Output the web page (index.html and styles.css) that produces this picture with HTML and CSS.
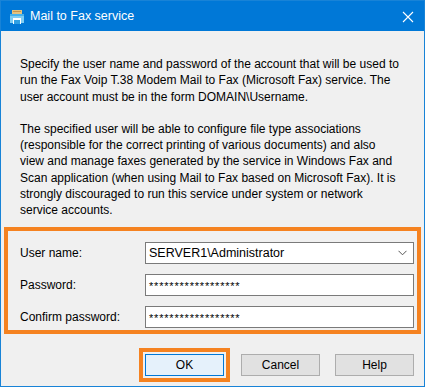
FILE: index.html
```html
<!DOCTYPE html>
<html lang="en">
  <head>
    <meta charset="UTF-8" />
    <title>Mail to Fax service</title>
    <link rel="stylesheet" href="styles.css">
  </head>
  <body>
    <div class="window">
      <div class="titlebar">
        <svg class="app-icon" width="16" height="16" viewBox="0 0 16 16">
          <rect x="3" y="1" width="10" height="5" fill="#e3c27f" />
          <rect x="4" y="2" width="8" height="1" fill="#c9964a" />
          <rect x="1" y="5" width="14" height="9" fill="#7fcdf3" />
          <rect x="1" y="5" width="14" height="2" fill="#45b2ec" />
          <rect x="4" y="9" width="8" height="6" fill="#ffffff" />
          <rect x="5" y="11" width="6" height="4" fill="#2f9fe3" />
        </svg>
        <span class="title">Mail to Fax service</span>
        <svg class="close" width="12" height="12" viewBox="0 0 12 12">
          <path d="M1 1 L11 11 M11 1 L1 11" stroke="#fff" stroke-width="1.1" fill="none" />
        </svg>
      </div>

      <div class="content">
        <p class="intro">
          Specify the user name and password of the account that will be used to<br>
          run the Fax Voip T.38 Modem Mail to Fax (Microsoft Fax) service. The<br>
          user account must be in the form DOMAIN\Username.
        </p>
        <p class="intro">
          The specified user will be able to configure file type associations<br>
          (responsible for the correct printing of various documents) and also<br>
          view and manage faxes generated by the service in Windows Fax and<br>
          Scan application (when using Mail to Fax based on Microsoft Fax). It is<br>
          strongly discouraged to run this service under system or network<br>
          service accounts.
        </p>

        <div class="account-box">
          <div class="field">
            <label>User name:</label>
            <div class="combo">
              <span>SERVER1\Administrator</span>
              <svg width="9" height="6" viewBox="0 0 9 6">
                <path d="M0.5 0.8 L4.5 4.8 L8.5 0.8" stroke="#555" stroke-width="1" fill="none" />
              </svg>
            </div>
          </div>
          <div class="field">
            <label>Password:</label>
            <div class="textbox">******************</div>
          </div>
          <div class="field">
            <label>Confirm password:</label>
            <div class="textbox">******************</div>
          </div>
        </div>

        <div class="buttons">
          <div class="ok-mark">
            <button class="btn btn-default">OK</button>
          </div>
          <button class="btn btn-cancel">Cancel</button>
          <button class="btn">Help</button>
        </div>
      </div>
    </div>
  </body>
</html>
```

FILE: styles.css
```css
body {
  margin: 0;
  padding: 0;
  font-family: 'Liberation Sans', Arial, sans-serif;
  font-size: 12px;
  color: #000;
  background-color: #fff;
}

.window {
  width: 425px;
  height: 387px;
  box-sizing: border-box;
  border: 1px solid #1883d7;
  background-color: #f0f0f0;
  display: flex;
  flex-direction: column;
}

.titlebar {
  height: 30px;
  background-color: #0078d7;
  display: flex;
  align-items: center;
  color: #fff;
  flex-shrink: 0;
}

.app-icon {
  margin-left: 8px;
  margin-top: 1px;
}

.title {
  margin-left: 5px;
  font-size: 12.5px;
  flex: 1;
}

.close {
  margin-right: 10px;
  margin-top: 1px;
}

.content {
  padding: 25px 0 0 0;
  flex: 1;
}

.intro {
  margin: 0 0 16px 19px;
  line-height: 16.3px;
  white-space: nowrap;
}

.intro:last-of-type {
  margin-bottom: 8px;
}

/* 帳號欄位外框 */
.account-box {
  margin-left: 3px;
  width: 417px;
  box-sizing: border-box;
  border: 4px solid #f58220;
  padding: 11px 3px 2px 12px;
  display: flex;
  flex-direction: column;
  gap: 10px;
}

.field {
  display: flex;
  align-items: center;
  height: 22px;
}

.field label {
  width: 125px;
}

.combo,
.textbox {
  flex: 1;
  height: 22px;
  box-sizing: border-box;
  background-color: #fff;
  border: 1px solid #7a7a7a;
  display: flex;
  align-items: center;
  padding-left: 3px;
}

.combo {
  justify-content: space-between;
  padding-right: 6px;
  font-size: 12.5px;
}

.textbox {
  font-size: 11px;
  letter-spacing: 0.8px;
  padding-top: 2px;
}

.buttons {
  display: flex;
  justify-content: flex-end;
  align-items: center;
  margin-top: 14px;
  padding-right: 10px;
}

.ok-mark {
  border: 4px solid #f58220;
  padding: 2px;
  margin-right: 11px;
}

.btn {
  width: 79px;
  height: 22px;
  box-sizing: border-box;
  background-color: #e1e1e1;
  border: 1px solid #adadad;
  font-family: 'Liberation Sans', Arial, sans-serif;
  font-size: 12px;
  color: #000;
  padding: 0;
  margin: 0;
}

.btn-cancel {
  margin-right: 15px;
}

.btn-default {
  display: block;
  background-color: #e5f1fb;
  border: 1px solid #0078d7;
}
```
